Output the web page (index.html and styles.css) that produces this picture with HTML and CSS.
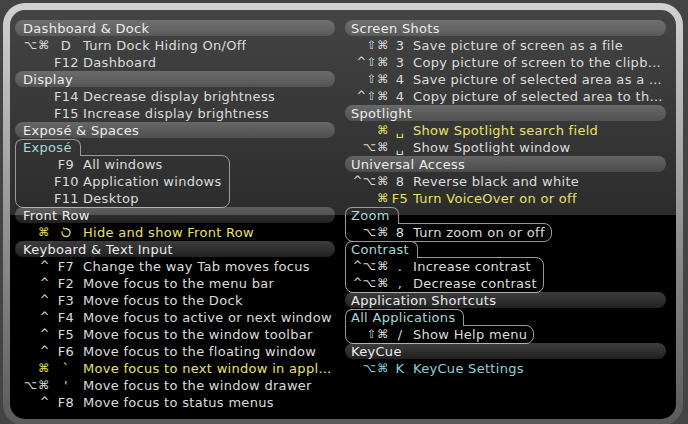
FILE: index.html
```html
<!DOCTYPE html>
<html>
<head>
<meta charset="utf-8">
<link rel="stylesheet" href="styles.css">
</head>
<body>
<div class="frame">
 <div class="panel">
  <div class="col left">
   <div class="hd">Dashboard &amp; Dock</div>
   <div class="row"><span class="mod">⌥⌘</span><span class="key">D</span><span class="desc">Turn Dock Hiding On/Off</span></div>
   <div class="row"><span class="mod"></span><span class="key">F12</span><span class="desc">Dashboard</span></div>
   <div class="hd">Display</div>
   <div class="row"><span class="mod"></span><span class="key">F14</span><span class="desc">Decrease display brightness</span></div>
   <div class="row"><span class="mod"></span><span class="key">F15</span><span class="desc">Increase display brightness</span></div>
   <div class="hd">Exposé &amp; Spaces</div>
   <div class="grp">
    <div class="tab">Exposé</div>
    <div class="box">
     <div class="row"><span class="mod"></span><span class="key">F9</span><span class="desc">All windows</span></div>
     <div class="row"><span class="mod"></span><span class="key">F10</span><span class="desc">Application windows</span></div>
     <div class="row"><span class="mod"></span><span class="key">F11</span><span class="desc">Desktop</span></div>
    </div>
   </div>
   <div class="hd">Front Row</div>
   <div class="row hl"><span class="mod">⌘</span><span class="key"><svg class="fr" viewBox="0 0 11 11" width="11" height="11"><path d="M3.3 2.1 A4 4 0 1 1 1.3 4.3" fill="none" stroke="currentColor" stroke-width="1.2"/><path d="M3.3 2.1 L2.1 0.6" fill="none" stroke="currentColor" stroke-width="1.2"/></svg></span><span class="desc">Hide and show Front Row</span></div>
   <div class="hd">Keyboard &amp; Text Input</div>
   <div class="row"><span class="mod">^</span><span class="key">F7</span><span class="desc">Change the way Tab moves focus</span></div>
   <div class="row"><span class="mod">^</span><span class="key">F2</span><span class="desc">Move focus to the menu bar</span></div>
   <div class="row"><span class="mod">^</span><span class="key">F3</span><span class="desc">Move focus to the Dock</span></div>
   <div class="row"><span class="mod">^</span><span class="key">F4</span><span class="desc">Move focus to active or next window</span></div>
   <div class="row"><span class="mod">^</span><span class="key">F5</span><span class="desc">Move focus to the window toolbar</span></div>
   <div class="row"><span class="mod">^</span><span class="key">F6</span><span class="desc">Move focus to the floating window</span></div>
   <div class="row hl"><span class="mod">⌘</span><span class="key">`</span><span class="desc">Move focus to next window in application</span></div>
   <div class="row"><span class="mod">⌥⌘</span><span class="key">'</span><span class="desc">Move focus to the window drawer</span></div>
   <div class="row"><span class="mod">^</span><span class="key">F8</span><span class="desc">Move focus to status menus</span></div>
  </div>
  <div class="col right">
   <div class="hd">Screen Shots</div>
   <div class="row"><span class="mod">⇧⌘</span><span class="key">3</span><span class="desc">Save picture of screen as a file</span></div>
   <div class="row"><span class="mod">^⇧⌘</span><span class="key">3</span><span class="desc">Copy picture of screen to the clipboard</span></div>
   <div class="row"><span class="mod">⇧⌘</span><span class="key">4</span><span class="desc">Save picture of selected area as a file</span></div>
   <div class="row"><span class="mod">^⇧⌘</span><span class="key">4</span><span class="desc">Copy picture of selected area to the clipboard</span></div>
   <div class="hd">Spotlight</div>
   <div class="row hl"><span class="mod">⌘</span><span class="key">␣</span><span class="desc">Show Spotlight search field</span></div>
   <div class="row"><span class="mod">⌥⌘</span><span class="key">␣</span><span class="desc">Show Spotlight window</span></div>
   <div class="hd">Universal Access</div>
   <div class="row"><span class="mod">^⌥⌘</span><span class="key">8</span><span class="desc">Reverse black and white</span></div>
   <div class="row hl"><span class="mod">⌘</span><span class="key">F5</span><span class="desc">Turn VoiceOver on or off</span></div>
   <div class="grp">
    <div class="tab">Zoom</div>
    <div class="box">
     <div class="row"><span class="mod">⌥⌘</span><span class="key">8</span><span class="desc">Turn zoom on or off</span></div>
    </div>
   </div>
   <div class="grp">
    <div class="tab">Contrast</div>
    <div class="box">
     <div class="row"><span class="mod">^⌥⌘</span><span class="key">.</span><span class="desc">Increase contrast</span></div>
     <div class="row"><span class="mod">^⌥⌘</span><span class="key">,</span><span class="desc">Decrease contrast</span></div>
    </div>
   </div>
   <div class="hd">Application Shortcuts</div>
   <div class="grp">
    <div class="tab">All Applications</div>
    <div class="box">
     <div class="row"><span class="mod">⇧⌘</span><span class="key">/</span><span class="desc">Show Help menu</span></div>
    </div>
   </div>
   <div class="hd">KeyCue</div>
   <div class="row cy"><span class="mod">⌥⌘</span><span class="key">K</span><span class="desc">KeyCue Settings</span></div>
  </div>
 </div>
</div>
</body>
</html>
```
FILE: styles.css
```css
* { box-sizing: border-box; }
html, body { margin: 0; height: 100%; }
body {
  background: #444;
  font-family: "DejaVu Sans", "Noto Sans", sans-serif;
  font-size: 13px;
  letter-spacing: 0.3px;
  overflow: hidden;
}
.frame {
  margin: 3px 0 0 3px;
  width: 680px;
  height: 423px;
  border-radius: 22px;
  padding: 7px;
  background: linear-gradient(#d2d2d2, #9c9c9c 45%, #5a5a5a);
}
.panel {
  height: 100%;
  border-radius: 15px;
  background: linear-gradient(#444 10px, #2c2c2c 215px, #000 215px) fixed;
  display: flex;
  gap: 10px;
  padding: 10px 10px 0 5px;
}
.col { display: flex; flex-direction: column; min-width: 0; }
.left { width: 320px; }
.right { width: 321px; }

.hd {
  height: 16px;
  line-height: 17px;
  margin-bottom: 1px;
  border-radius: 8px;
  background: linear-gradient(rgba(255,255,255,0.24), rgba(255,255,255,0.13));
  color: #ececec;
  padding-left: 8px;
  white-space: nowrap;
  flex: none;
}
.right .hd { padding-left: 6px; }

.row {
  display: flex;
  height: 17px;
  line-height: 17px;
  color: #dcdcdc;
  padding-left: 8px;
  padding-right: 3px;
  white-space: nowrap;
  flex: none;
}
.right .row { padding-left: 6px; padding-right: 3px; }
.row.hl { color: #e9e16a; }
.row.cy { color: #86d3dd; }

.mod {
  width: 27px;
  flex: none;
  display: flex;
  justify-content: flex-end;
  font-size: 11.5px;
  letter-spacing: 0.6px;
}
.right .mod { width: 38px; }
.key { width: 24px; margin-left: 4px; flex: none; text-align: center; }
.right .key { width: 18px; margin-left: 2px; }
.desc { margin-left: 5px; overflow: hidden; text-overflow: ellipsis; min-width: 0; }
.right .desc { margin-left: 4px; }
.fr { vertical-align: -1px; }

.grp { display: flex; flex-direction: column; align-items: flex-start; flex: none; }
.tab {
  position: relative;
  z-index: 1;
  height: 17px;
  line-height: 16px;
  border: 1px solid #9a9a9a;
  border-bottom: 0;
  border-radius: 7px 7px 0 0;
  padding: 0 8px 0 7px;
  color: #a3dada;
  background: linear-gradient(#444 10px, #2c2c2c 215px, #000 215px) fixed;
  white-space: nowrap;
}
.right .tab { padding-left: 5px; }
.box {
  margin-top: -1px;
  margin-bottom: -1px;
  border: 1px solid #9a9a9a;
  border-radius: 0 8px 8px 8px;
  padding-right: 7px;
}
.box .row { padding-left: 7px; padding-right: 0; }
.right .box { padding-right: 6px; }
.right .box .row { padding-left: 5px; padding-right: 0; }
```
